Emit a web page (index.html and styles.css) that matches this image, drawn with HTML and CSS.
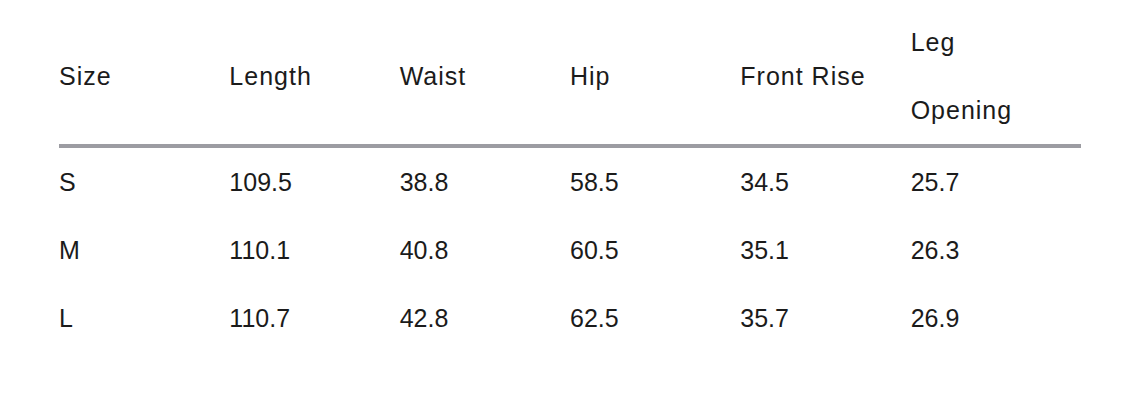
FILE: index.html
```html
<!DOCTYPE html>
<html>
<head>
<meta charset="utf-8">
<link rel="stylesheet" href="styles.css">
</head>
<body>
<table class="size-table">
  <thead>
    <tr>
      <th>Size</th>
      <th>Length</th>
      <th>Waist</th>
      <th>Hip</th>
      <th>Front Rise</th>
      <th>Leg Opening</th>
    </tr>
  </thead>
  <tbody>
    <tr><td>S</td><td>109.5</td><td>38.8</td><td>58.5</td><td>34.5</td><td>25.7</td></tr>
    <tr><td>M</td><td>110.1</td><td>40.8</td><td>60.5</td><td>35.1</td><td>26.3</td></tr>
    <tr><td>L</td><td>110.7</td><td>42.8</td><td>62.5</td><td>35.7</td><td>26.9</td></tr>
  </tbody>
</table>
</body>
</html>
```
FILE: styles.css
```css
html, body {
  margin: 0;
  background: #ffffff;
}
body {
  padding: 8px 0 0 59px;
  font-family: "Liberation Sans", Arial, sans-serif;
  color: #1b1b1b;
}
.size-table {
  width: 1022px;
  border-collapse: collapse;
  table-layout: fixed;
  font-size: 25px;
  line-height: 68px;
}
.size-table th {
  font-weight: normal;
  text-align: left;
  vertical-align: middle;
  letter-spacing: 1px;
  padding: 0 30px 0 0;
  border-bottom: 4px solid #9c9ca2;
}
.size-table td {
  text-align: left;
  padding: 0;
  height: 68px;
  line-height: 66px;
}
```
